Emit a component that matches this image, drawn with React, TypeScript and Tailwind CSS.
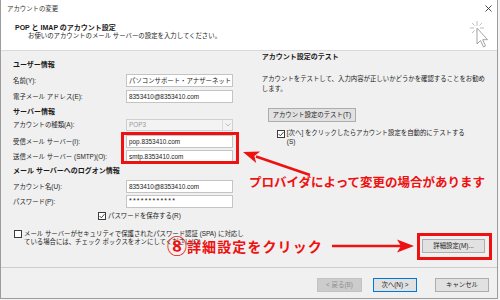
import React from 'react';

const JP = "font-['Liberation_Sans','Noto_Sans_CJK_JP',sans-serif]";

const Check = ({ checked }: { checked?: boolean }) => (
    <span className="flex h-[8px] w-[8px] shrink-0 items-center justify-center border border-[#3c3c3c] bg-white">
        {checked && (
            <svg width="6" height="6" viewBox="0 0 6 6">
                <path d="M0.6 3 L2.4 4.8 L5.5 1.1" fill="none" stroke="#333" strokeWidth="0.9" />
            </svg>
        )}
    </span>
);

const Field = ({ children, className = '' }: { children: React.ReactNode; className?: string }) => (
    <div className={`flex h-[13px] w-[107px] items-center overflow-hidden whitespace-nowrap border border-[#c4c4c4] bg-white pl-[2px] ${className}`}>
        {children}
    </div>
);

const Row = ({ label, children, className = '' }: { label: string; children: React.ReactNode; className?: string }) => (
    <div className={`flex items-center ${className}`}>
        <span className="w-[113px] whitespace-nowrap">{label}</span>
        {children}
    </div>
);

const Heading = ({ children, className = '' }: { children: React.ReactNode; className?: string }) => (
    <div className={`h-[10px] text-[7px] font-bold leading-[10px] whitespace-nowrap text-[#1a1a1a] ${className}`}>{children}</div>
);

const Btn = ({ children, className = '' }: { children: React.ReactNode; className?: string }) => (
    <div className={`flex h-[14px] items-center justify-center border text-[6.4px] whitespace-nowrap ${className}`}>{children}</div>
);

export default function App() {
    return (
        <div className={`relative h-[300px] w-[500px] overflow-hidden bg-[#f4f4f4] text-[6.4px] text-[#222] ${JP}`}>
            <div className="flex h-[299px] w-[498px] flex-col border-x border-b border-[#9c9c9c]">
                {/* title bar */}
                <div className="flex h-[17px] items-center justify-between bg-white pl-[6px] pr-[5px]">
                    <span className="text-[#333]">アカウントの変更</span>
                    <svg width="7" height="7" viewBox="0 0 7 7">
                        <path d="M0.5 0.5 L6.5 6.5 M6.5 0.5 L0.5 6.5" stroke="#333" strokeWidth="0.9" />
                    </svg>
                </div>

                {/* header */}
                <div className="relative h-[34px] border-b border-[#d9d9d9] bg-white">
                    <div className="pl-[14px] pt-[6px] text-[7px] font-bold leading-[9px] text-[#1a1a1a]">POP と IMAP のアカウント設定</div>
                    <div className="pl-[27px] leading-[7px]">お使いのアカウントのメール サーバーの設定を入力してください。</div>
                    <svg className="absolute left-[465px] top-[2px]" width="26" height="30" viewBox="0 0 26 30">
                        <g stroke="#b8b8b8" strokeWidth="0.9">
                            <path d="M11 2 L11 7 M11 13 L11 11 M4 9 L8 9 M14 9 L18 9 M6 4 L8.5 6.5 M16 4 L13.5 6.5 M6 14 L8.5 11.5" />
                        </g>
                        <path d="M11 9 L11 25 L14.5 21.5 L17.5 28 L19.5 27 L16.7 20.7 L21.5 20.7 Z" fill="#fff" stroke="#9a9a9a" strokeWidth="0.9" strokeLinejoin="round" />
                    </svg>
                </div>

                {/* body */}
                <div className="flex h-[216px] bg-[#f0f0f0]">
                    <div className="flex w-[252px] flex-col pl-[12px]">
                        <Heading className="mt-[9px]">ユーザー情報</Heading>
                        <Row label="名前(Y):" className="mt-[4px]">
                            <Field>
                                パソコンサポート・アナザーネット<span className="ml-[0.5px] h-[9px] w-[0.8px] bg-[#222]" />
                            </Field>
                        </Row>
                        <Row label="電子メール アドレス(E):" className="mt-[3px]">
                            <Field>8353410@8353410.com</Field>
                        </Row>

                        <Heading className="mt-[4px]">サーバー情報</Heading>
                        <Row label="アカウントの種類(A):" className="mt-[2px]">
                            <div className="flex h-[12px] w-[107px] items-center justify-between border border-[#cfcfcf] bg-[#f3f3f3] pl-[2px] text-[#9a9a9a]">
                                POP3
                                <span className="flex h-full w-[10px] items-center justify-center border-l border-[#dadada]">
                                    <svg width="6" height="4" viewBox="0 0 6 4">
                                        <path d="M0.5 0.5 L3 3 L5.5 0.5" fill="none" stroke="#b0b0b0" strokeWidth="0.8" />
                                    </svg>
                                </span>
                            </div>
                        </Row>
                        <Row label="受信メール サーバー(I):" className="mt-[4px]">
                            <Field>pop.8353410.com</Field>
                        </Row>
                        <Row label="送信メール サーバー (SMTP)(O):" className="mt-[2px]">
                            <Field>smtp.8353410.com</Field>
                        </Row>

                        <Heading className="mt-[3px]">メール サーバーへのログオン情報</Heading>
                        <Row label="アカウント名(U):" className="mt-[4px]">
                            <Field>8353410@8353410.com</Field>
                        </Row>
                        <Row label="パスワード(P):" className="mt-[2px]">
                            <Field>
                                <span className="text-[7px] tracking-[1.2px]">************</span>
                            </Field>
                        </Row>

                        <div className="mt-[3px] flex h-[10px] items-center gap-[2px] pl-[85px]">
                            <Check checked />
                            <span>パスワードを保存する(R)</span>
                        </div>

                        <div className="mt-[9px] flex items-start gap-[2px] pl-[1px]">
                            <Check />
                            <div className="-mt-[0.5px] leading-[8px] whitespace-nowrap">
                                メール サーバーがセキュリティで保護されたパスワード認証 (SPA) に対応し
                                <br />
                                ている場合には、チェック ボックスをオンにしてください(Q)
                            </div>
                        </div>
                    </div>

                    <div className="flex flex-1 flex-col pl-[12px] pr-[12px]">
                        <Heading className="mt-[1px]">アカウント設定のテスト</Heading>
                        <div className="mt-[12px] leading-[10px] whitespace-nowrap">
                            アカウントをテストして、入力内容が正しいかどうかを確認することをお勧め
                            <br />
                            します。
                        </div>
                        <Btn className="ml-[6px] mt-[14px] w-[88px] border-[#adadad] bg-[#e1e1e1]">アカウント設定のテスト(T)</Btn>
                        <div className="ml-[15px] mt-[6px] flex items-start gap-[2px]">
                            <span className="mt-[1.5px]">
                                <Check checked />
                            </span>
                            <div className="leading-[9px] whitespace-nowrap">
                                [次へ] をクリックしたらアカウント設定を自動的にテストする
                                <br />
                                (S)
                            </div>
                        </div>
                        <Btn className="mb-[14px] mt-auto w-[63px] self-end border-[#adadad] bg-[#e1e1e1]">詳細設定(M)...</Btn>
                    </div>
                </div>

                {/* footer */}
                <div className="flex flex-1 items-start justify-end border-t border-[#cdcdcd] bg-[#f0f0f0] pr-[8px] pt-[10px]">
                    <Btn className="w-[45px] border-[#c2c2c2] bg-[#cccccc] text-[#8e8e8e]">&lt; 戻る(B)</Btn>
                    <Btn className="ml-[11px] w-[44px] border-[#0078d7] bg-[#e1e1e1]">次へ(N) &gt;</Btn>
                    <Btn className="ml-[18px] w-[54px] border-[#adadad] bg-[#e1e1e1]">キャンセル</Btn>
                </div>
            </div>

            {/* red annotations */}
            <div className="pointer-events-none absolute left-[121px] top-[132px] h-[32px] w-[118px] border-[3px] border-[#ee1111]" />
            <div className="pointer-events-none absolute left-[417px] top-[233px] h-[27px] w-[75px] border-[3px] border-[#ee1111]" />
            <svg className="pointer-events-none absolute left-0 top-0" width="500" height="300" viewBox="0 0 500 300">
                <g fill="#ee1111" stroke="none">
                    <path d="M310 175 L256 156.4" stroke="#ee1111" strokeWidth="2.6" />
                    <polygon points="243,152 260.1,151.5 254.4,155.9 256.2,162.9" />
                    <path d="M332 246 L402 246" stroke="#ee1111" strokeWidth="2.6" />
                    <polygon points="414,246 397,239.5 401,246 397,252.5" />
                </g>
            </svg>
            <div className="absolute left-[249px] top-[175px] font-['Noto_Sans_CJK_JP',sans-serif] text-[12.5px] font-bold leading-[14px] whitespace-nowrap text-[#ee1111]">
                プロバイダによって変更の場合があります
            </div>
            <div className="absolute left-[167px] top-[238px] flex items-center font-['Noto_Sans_CJK_JP',sans-serif] text-[14px] font-bold leading-[16px] tracking-[1.1px] whitespace-nowrap text-[#ee1111]">
                <span className="text-[20px] leading-[16px] tracking-normal">⑧</span>
                <span>詳細設定をクリック</span>
            </div>
        </div>
    );
}
